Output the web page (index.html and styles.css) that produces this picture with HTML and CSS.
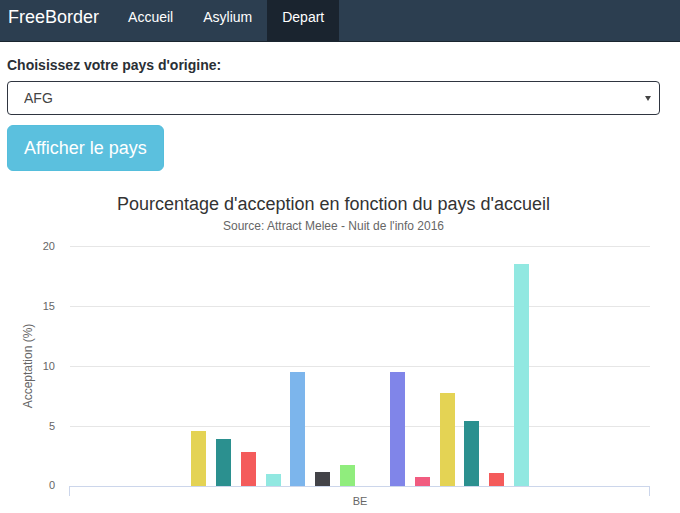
FILE: index.html
```html
<!DOCTYPE html>
<html lang="fr">
<head>
<meta charset="utf-8">
<title>FreeBorder</title>
<link rel="stylesheet" href="styles.css">
</head>
<body>
<nav class="navbar">
  <a class="brand" href="#">FreeBorder</a>
  <ul class="nav">
    <li><a href="#">Accueil</a></li>
    <li><a href="#">Asylium</a></li>
    <li class="active"><a href="#">Depart</a></li>
  </ul>
</nav>
<main class="container">
  <form class="form">
    <div class="form-group">
      <label class="label" for="pays">Choisissez votre pays d'origine:</label>
      <div class="select-wrap">
        <select id="pays" class="select">
          <option>AFG</option>
        </select>
        <svg class="select-arrow" width="6" height="5" viewBox="0 0 6 5"><path d="M0 0H6L3 5Z" fill="#444"/></svg>
      </div>
    </div>
    <button type="button" class="btn">Afficher le pays</button>
  </form>
  <section class="chart">
    <div class="chart-title">Pourcentage d'acception en fonction du pays d'accueil</div>
    <div class="chart-subtitle">Source: Attract Melee - Nuit de l'info 2016</div>
    <svg class="plot" width="653" height="279" viewBox="0 0 653 279">
      <g stroke="#e6e6e6" stroke-width="1">
        <line x1="63" x2="643" y1="12.5" y2="12.5"/>
        <line x1="63" x2="643" y1="72.5" y2="72.5"/>
        <line x1="63" x2="643" y1="132.5" y2="132.5"/>
        <line x1="63" x2="643" y1="192.5" y2="192.5"/>
      </g>
      <g class="ylabels">
        <text x="48" y="16">20</text>
        <text x="48" y="76">15</text>
        <text x="48" y="136">10</text>
        <text x="48" y="196">5</text>
        <text x="48" y="255">0</text>
      </g>
      <text class="ytitle" transform="translate(25 132) rotate(-90)">Acceptation (%)</text>
      <g>
        <rect x="184" y="197" width="15" height="55" fill="#e4d354"/>
        <rect x="209" y="205" width="15" height="47" fill="#2b908f"/>
        <rect x="234" y="218" width="15" height="34" fill="#f45b5b"/>
        <rect x="259" y="240" width="15" height="12" fill="#91e8e1"/>
        <rect x="283" y="138" width="15" height="114" fill="#7cb5ec"/>
        <rect x="308" y="238" width="15" height="14" fill="#434348"/>
        <rect x="333" y="231" width="15" height="21" fill="#90ed7d"/>
        <rect x="383" y="138" width="15" height="114" fill="#8085e9"/>
        <rect x="408" y="243" width="15" height="9" fill="#f15c80"/>
        <rect x="433" y="159" width="15" height="93" fill="#e4d354"/>
        <rect x="457" y="187" width="15" height="65" fill="#2b908f"/>
        <rect x="482" y="239" width="15" height="13" fill="#f45b5b"/>
        <rect x="507" y="30" width="15" height="222" fill="#91e8e1"/>
      </g>
      <g stroke="#ccd6eb" stroke-width="1">
        <line x1="63" x2="643" y1="252.5" y2="252.5"/>
        <line x1="62.5" x2="62.5" y1="252" y2="262"/>
        <line x1="642.5" x2="642.5" y1="252" y2="262"/>
      </g>
      <text class="xlabel" x="353" y="271">BE</text>
    </svg>
  </section>
</main>
</body>
</html>
```

FILE: styles.css
```css
* { box-sizing: border-box; }

html, body {
  margin: 0;
  padding: 0;
  background: #fff;
  font-family: "Liberation Sans", Arial, sans-serif;
  color: #333;
}

.navbar {
  display: flex;
  align-items: stretch;
  height: 42px;
  background: #2c3e50;
  border-bottom: 1px solid #1a252f;
}

.brand {
  padding: 7px 14px 0 8px;
  font-size: 18px;
  line-height: 20px;
  color: #fff;
  text-decoration: none;
}

.nav {
  display: flex;
  margin: 0;
  padding: 0;
  list-style: none;
}

.nav li a {
  display: block;
  height: 41px;
  padding: 7px 15px 0;
  font-size: 14px;
  line-height: 20px;
  color: #fff;
  text-decoration: none;
}

.nav li.active a {
  background: #1a242f;
}

.container {
  padding: 13px 20px 0 7px;
}

.form-group {
  display: flex;
  flex-direction: column;
  margin-bottom: 10px;
}

.label {
  font-size: 14px;
  line-height: 20px;
  font-weight: bold;
  color: #2a2f35;
  margin: 0 0 6px 0;
}

.select-wrap {
  position: relative;
}

.select {
  display: block;
  width: 100%;
  height: 34px;
  padding: 0 16px;
  font-family: "Liberation Sans", Arial, sans-serif;
  font-size: 14px;
  color: #444;
  background: #fff;
  border: 1px solid #2f3540;
  border-radius: 4px;
  -webkit-appearance: none;
  appearance: none;
}

.select-arrow {
  position: absolute;
  right: 9px;
  top: 15px;
}

.btn {
  display: block;
  height: 46px;
  padding: 0 16px;
  font-family: "Liberation Sans", Arial, sans-serif;
  font-size: 18px;
  line-height: 24px;
  color: #fff;
  background: #5bc0de;
  border: 1px solid #55bedc;
  border-radius: 6px;
}

.chart {
  margin-top: 22px;
}

.chart-title {
  text-align: center;
  font-size: 18px;
  line-height: 22px;
  color: #333;
}

.chart-subtitle {
  margin-top: 3px;
  text-align: center;
  font-size: 12px;
  line-height: 16px;
  color: #666;
}

.plot {
  display: block;
  font-family: "Liberation Sans", Arial, sans-serif;
}

.ylabels text {
  font-size: 11px;
  fill: #666;
  text-anchor: end;
}

.ytitle {
  font-size: 12px;
  fill: #666;
  text-anchor: middle;
}

.xlabel {
  font-size: 11px;
  fill: #666;
  text-anchor: middle;
}
```
